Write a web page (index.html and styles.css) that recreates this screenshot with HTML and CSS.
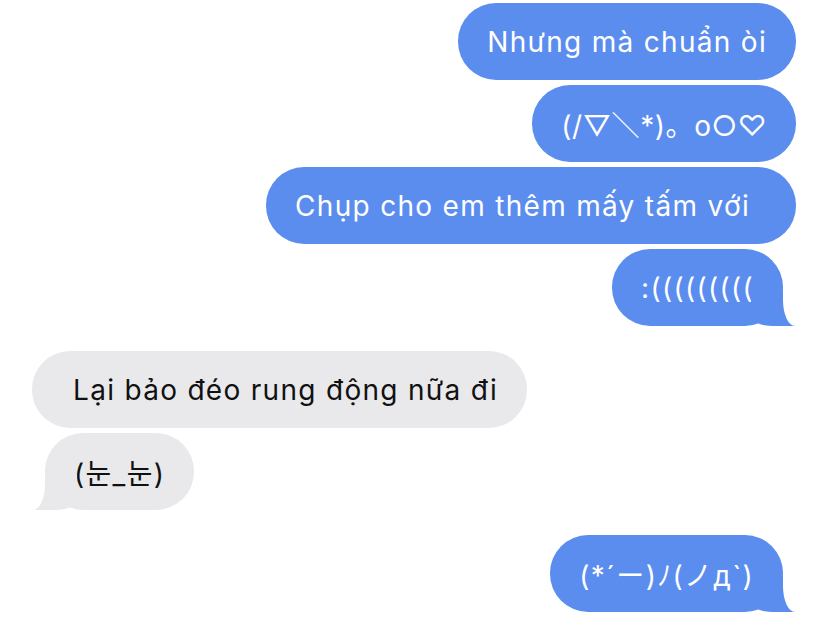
FILE: index.html
```html
<!DOCTYPE html>
<html lang="vi">
<head>
  <meta charset="UTF-8">
  <meta name="viewport" content="width=device-width, initial-scale=1.0">
  <title>Messages</title>
  <link rel="stylesheet" href="styles.css">
</head>
<body>
  <div class="thread">
    <div class="group">
      <div class="row sent"><div class="bubble">Nhưng mà chuẩn òi</div></div>
      <div class="row sent"><div class="bubble tight">(/▽＼*)。o○♡</div></div>
      <div class="row sent"><div class="bubble wide-right">Chụp cho em thêm mấy tấm với</div></div>
      <div class="row sent"><div class="bubble tail">:(((((((((</div></div>
    </div>
    <div class="group">
      <div class="row received"><div class="bubble wide-left">Lại bảo đéo rung động nữa đi</div></div>
      <div class="row received"><div class="bubble tail">(눈_눈)</div></div>
    </div>
    <div class="group">
      <div class="row sent"><div class="bubble tail">(*´ー)ﾉ(ノд`)</div></div>
    </div>
  </div>
</body>
</html>
```

FILE: styles.css
```css
body {
  margin: 0;
  background-color: #fff;
  font-family: "Inter", "Noto Sans CJK KR", "Noto Sans CJK JP", "DejaVu Sans", sans-serif;
}

.thread {
  display: flex;
  flex-direction: column;
  gap: 25px;
  padding: 3px 32px 0;
}

.group {
  display: flex;
  flex-direction: column;
  gap: 5px;
}

.row {
  display: flex;
}

.row.sent {
  justify-content: flex-end;
}

.row.received {
  justify-content: flex-start;
}

.bubble {
  position: relative;
  height: 77px;
  display: flex;
  align-items: center;
  padding: 0 29px;
  border-radius: 38px;
  font-size: 28px;
  letter-spacing: 1.3px;
  white-space: nowrap;
}

.sent .bubble {
  background-color: #5b8def;
  color: #fff;
}

.received .bubble {
  background-color: #e9e9eb;
  color: #111;
}

.tight {
  letter-spacing: 0.6px;
}

.wide-right {
  padding-right: 46px;
}

.wide-left {
  padding-left: 41px;
}

/* tails */
.tail::before,
.tail::after {
  content: "";
  position: absolute;
  bottom: 0;
}

.tail::before {
  height: 36px;
  width: 44px;
}

.tail::after {
  height: 44px;
  width: 40px;
  background-color: #fff;
}

.sent .tail {
  margin-right: 13px;
}

.sent .tail::before {
  right: -12px;
  background-color: #5b8def;
  border-bottom-left-radius: 22px 10px;
}

.sent .tail::after {
  right: -40px;
  border-bottom-left-radius: 12px 26px;
}

.received .tail {
  margin-left: 13px;
}

.received .tail::before {
  left: -12px;
  background-color: #e9e9eb;
  border-bottom-right-radius: 22px 10px;
}

.received .tail::after {
  left: -40px;
  border-bottom-right-radius: 12px 26px;
}
```
